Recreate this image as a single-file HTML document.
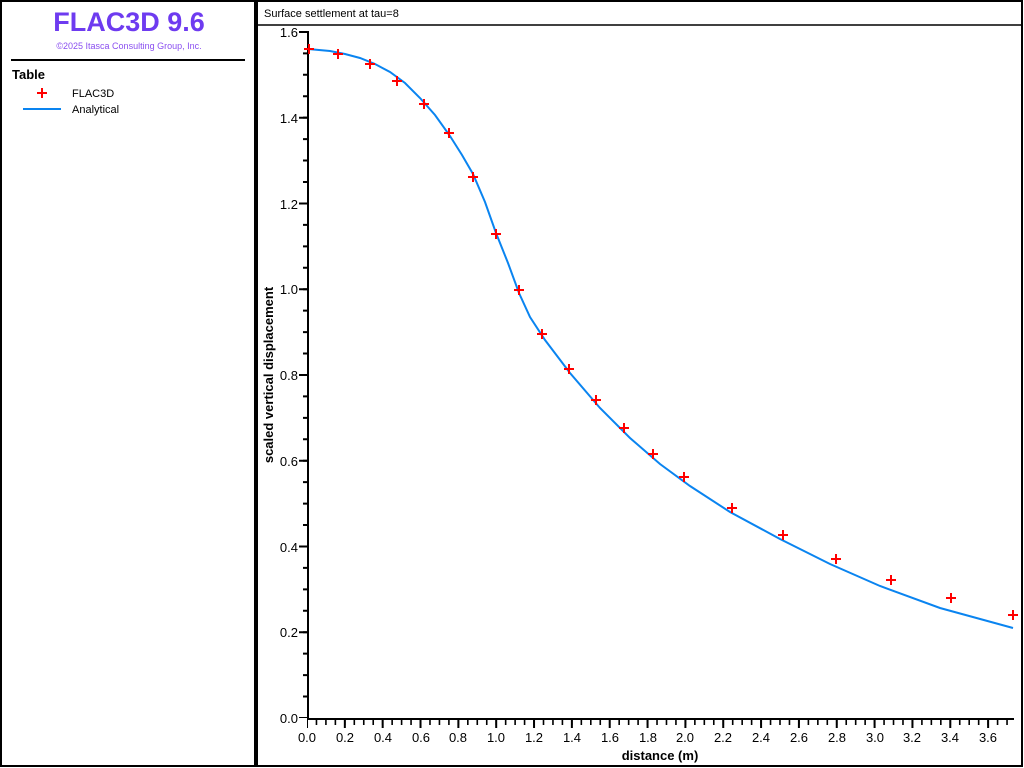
<!DOCTYPE html>
<html><head><meta charset="utf-8"><style>
html,body{margin:0;padding:0;background:#fff;width:1024px;height:768px;overflow:hidden}
svg{display:block}
text{font-family:"Liberation Sans",sans-serif}
</style></head><body>
<svg width="1024" height="768" viewBox="0 0 1024 768">
<rect x="0" y="0" width="1024" height="768" fill="#fff"/>
<rect x="1" y="1" width="254" height="765" fill="none" stroke="#000" stroke-width="2"/>
<text x="129" y="31" text-anchor="middle" font-size="27" font-weight="bold" fill="#6e3bf0">FLAC3D 9.6</text>
<text x="129" y="49" text-anchor="middle" font-size="9" fill="#8a4ff0">©2025 Itasca Consulting Group, Inc.</text>
<line x1="11" y1="60" x2="245" y2="60" stroke="#000" stroke-width="2"/>
<text x="12" y="79" font-size="13" font-weight="bold" fill="#000">Table</text>
<path d="M37 93h10M42 88v10" stroke="#f00" stroke-width="2"/>
<text x="72" y="97" font-size="11" fill="#000">FLAC3D</text>
<line x1="23" y1="109" x2="61" y2="109" stroke="#0a84f0" stroke-width="2"/>
<text x="72" y="113" font-size="11" fill="#000">Analytical</text>
<rect x="257" y="1" width="765" height="765" fill="none" stroke="#000" stroke-width="2"/>
<line x1="257" y1="25" x2="1022" y2="25" stroke="#000" stroke-width="1.5"/>
<text x="264" y="17" font-size="11" fill="#000">Surface settlement at tau=8</text>
<path d="M302 32H308V719H1014" fill="none" stroke="#000" stroke-width="2"/>
<line x1="307" y1="719" x2="1014" y2="719" stroke="#000" stroke-width="6" stroke-dasharray="1.6 7.86" stroke-dashoffset="0.8" transform="translate(0,3)"/>
<line x1="307" y1="724" x2="1014" y2="724" stroke="#000" stroke-width="8" stroke-dasharray="2 35.84" stroke-dashoffset="1"/>
<line x1="305" y1="718" x2="305" y2="32" stroke="#000" stroke-width="4" stroke-dasharray="2 19.44" stroke-dashoffset="1"/>
<line x1="303" y1="718" x2="303" y2="31" stroke="#000" stroke-width="8" stroke-dasharray="2 83.75" stroke-dashoffset="1"/>
<g font-size="13" fill="#000" text-anchor="end">
<text x="298" y="723">0.0</text>
<text x="298" y="637">0.2</text>
<text x="298" y="552">0.4</text>
<text x="298" y="466">0.6</text>
<text x="298" y="380">0.8</text>
<text x="298" y="294">1.0</text>
<text x="298" y="209">1.2</text>
<text x="298" y="123">1.4</text>
<text x="298" y="37">1.6</text>
</g>
<g font-size="13" fill="#000" text-anchor="middle">
<text x="307" y="742">0.0</text><text x="345" y="742">0.2</text><text x="383" y="742">0.4</text><text x="421" y="742">0.6</text><text x="458" y="742">0.8</text><text x="496" y="742">1.0</text><text x="534" y="742">1.2</text><text x="572" y="742">1.4</text><text x="610" y="742">1.6</text><text x="648" y="742">1.8</text><text x="685" y="742">2.0</text><text x="723" y="742">2.2</text><text x="761" y="742">2.4</text><text x="799" y="742">2.6</text><text x="837" y="742">2.8</text><text x="875" y="742">3.0</text><text x="912" y="742">3.2</text><text x="950" y="742">3.4</text><text x="988" y="742">3.6</text>
</g>
<text x="660" y="760" text-anchor="middle" font-size="13" font-weight="bold">distance (m)</text>
<text transform="translate(273,375) rotate(-90)" text-anchor="middle" font-size="13" font-weight="bold">scaled vertical displacement</text>
<polyline fill="none" stroke="#0a84f0" stroke-width="2" points="308,49 330,51 345,54 360,58 375,64 390,72 405,83 420,98 435,115 450,136 462,155 473,174 485,202 496,233 508,263 519,293 530,317 545,340 570,373 600,408 630,438 660,464 690,486 730,512 780,539 830,564 880,586 940,608 1013,628"/>
<path stroke="#f00" stroke-width="2" fill="none" d="
M304 49h10M309 44v10
M333 54h10M338 49v10
M365 64h10M370 59v10
M392 81h10M397 76v10
M419 104h10M424 99v10
M444 133h10M449 128v10
M468 177h10M473 172v10
M491 234h10M496 229v10
M514 290h10M519 285v10
M537 334h10M542 329v10
M564 369h10M569 364v10
M591 400h10M596 395v10
M619 428h10M624 423v10
M648 454h10M653 449v10
M679 477h10M684 472v10
M727 508h10M732 503v10
M778 535h10M783 530v10
M831 559h10M836 554v10
M886 580h10M891 575v10
M946 598h10M951 593v10
M1008 615h10M1013 610v10"/>
</svg>
</body></html>
